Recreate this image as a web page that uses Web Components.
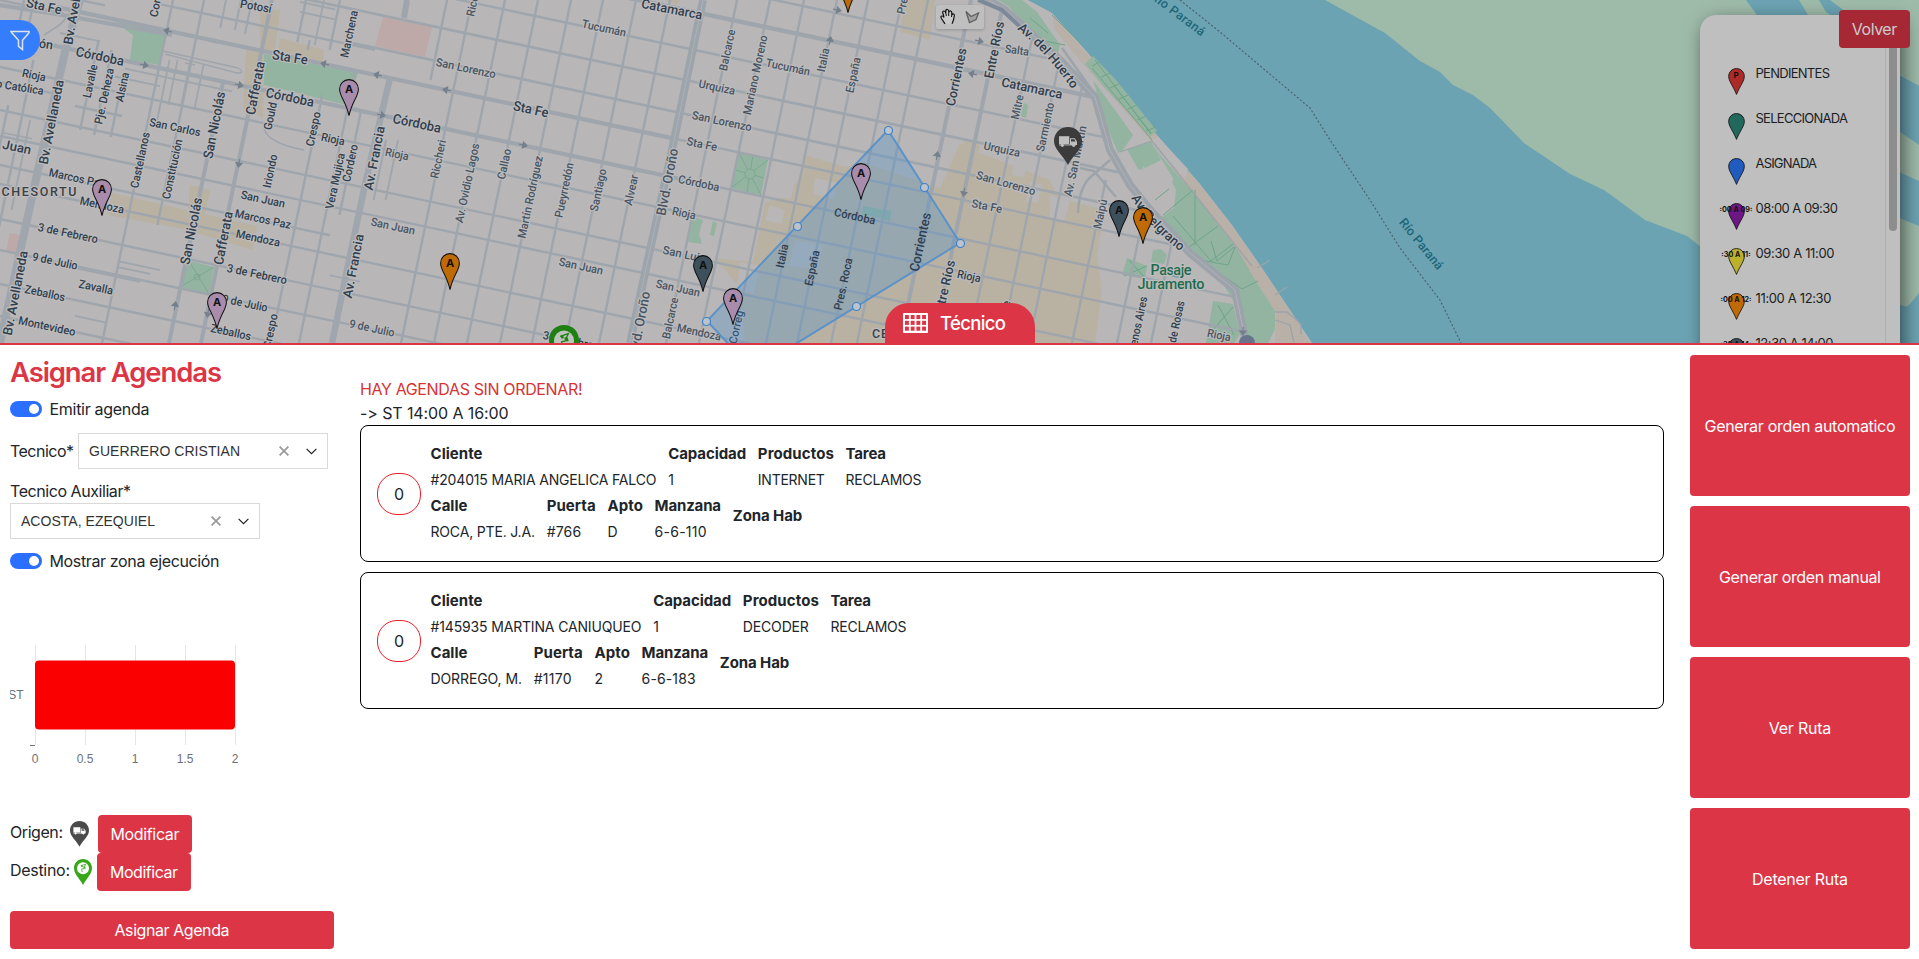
<!DOCTYPE html>
<html lang="es">
<head>
<meta charset="utf-8">
<title>Asignar Agendas</title>
<style>
html,body{margin:0;height:100%;overflow:hidden}
body{font-family:Inter,"Liberation Sans",sans-serif;font-size:16px;line-height:24px;color:#212529;background:#fff}
</style>
</head>
<body>
<agenda-page></agenda-page>
<script>
const RED = '#dc3545';
const fitted = [];

class BaseEl extends HTMLElement {
  constructor() { super(); this.attachShadow({ mode: 'open' }); }
  connectedCallback() { if (!this.done) { this.done = true; this.shadowRoot.innerHTML = this.view(); } }
  a(n, d = '') { return this.getAttribute(n) ?? d; }
}

/* Single line of text tracked to a given width */
class UiText extends BaseEl {
  view() {
    fitted.push(this);
    return `<style>:host{display:inline-block;white-space:nowrap}</style><slot></slot>`;
  }
  fit() {
    const w = parseFloat(this.a('w', '0')), n = this.textContent.length;
    if (!w || n < 2) return;
    const ls = (w + 1 - this.getBoundingClientRect().width) / (n - 1);
    this.style.letterSpacing = ls.toFixed(3) + 'px';
    this.style.marginRight = (-ls).toFixed(3) + 'px';
  }
}

class UiButton extends BaseEl {
  view() {
    return `<style>:host{display:flex;align-items:center;justify-content:center;box-sizing:border-box;height:38px;border-radius:4px;background:${RED};color:#fff;font-size:16px;padding-bottom:1px}</style><slot></slot>`;
  }
}

class UiSwitch extends BaseEl {
  view() {
    return `<style>:host{display:flex;align-items:center;gap:7.500px;height:24px}
    i{width:32px;height:16px;border-radius:8px;background:#2b6fff;display:flex;justify-content:flex-end;align-items:center;box-sizing:border-box;padding-right:3px}
    i::after{content:"";width:10.5px;height:10.5px;border-radius:50%;background:#fff}</style><i></i><slot></slot>`;
  }
}

class UiSelect extends BaseEl {
  view() {
    return `<style>:host{display:flex;align-items:center;box-sizing:border-box;width:250px;height:36px;border:1px solid #d9d9d9;background:#fff;padding:0 10px;font:14px/34px "Liberation Sans",Arial,sans-serif;color:#333}
    div{flex:1} svg{display:block}</style><div><slot></slot></div>
    <svg width="10" height="10" viewBox="0 0 10 10" style="margin-right:17px"><path d="M.6.6l8.8 8.8M9.4.6L.6 9.4" stroke="#999" stroke-width="1.7" fill="none"/></svg>
    <svg width="11" height="7" viewBox="0 0 11 7"><path d="M.6.8l4.9 4.9L10.4.8" stroke="#222" stroke-width="1.2" fill="none"/></svg>`;
  }
}

/* Teardrop marker */
class MapPin extends BaseEl {
  view() {
    const w = +this.a('size', '20'), h = w * 1.85, tall = this.hasAttribute('short') ? 27 : 36;
    const vb = tall === 27 ? '0 0 20 31' : '0 0 20 36';
    const d = tall === 27
      ? 'M10 .7C4.8 .7.8 4.6.8 9.8c0 3.6 2.3 7 4.3 10.700C7.600 25 9 28 10 30.300c1-2.300 2.400-5.300 4.900-9.800 2-3.700 4.300-7.100 4.300-10.700C19.200 4.600 15.200.7 10 .7z'
      : 'M10 .6C4.700.6.6 4.700.6 9.900c0 3.700 1.700 6.600 3.700 10.600C6.800 25.500 9 31 10 35.700c1-4.700 3.200-10.200 5.700-15.200 2-4 3.700-6.900 3.700-10.600C19.400 4.700 15.300.6 10 .6z';
    return `<style>:host{display:block;position:relative;width:${w}px}svg{display:block;width:${w}px;height:${tall === 27 ? 27 : h}px;overflow:visible}
    span{position:absolute;left:-10px;right:-10px;top:${this.a('ty', '4')}px;text-align:center;font:bold ${this.a('fs', '11')}px/12px Inter,sans-serif;color:#111;white-space:nowrap}</style>
    <svg viewBox="${vb}" preserveAspectRatio="none"><path d="${d}" fill="${this.a('color')}" stroke="#111" stroke-width="1"/></svg><span>${this.a('label')}</span>`;
  }
}

class TruckPin extends BaseEl {
  view() {
    const w = +this.a('size', '28');
    return `<style>:host{display:block}svg{display:block}</style><svg width="${w}" height="${w * 38 / 28}" viewBox="0 0 28 38">
    <path d="M14 0C6 0 0 6.200 0 14c0 8.500 8.500 13.500 14 24 5.500-10.500 14-15.500 14-24C28 6.200 22 0 14 0z" fill="${this.a('color', '#3b3b3b')}"/>
    <g fill="${this.a('ink', '#bfbfbf')}"><path d="M5 9.200h10.300v7.800H5z"/><path d="M5 17.400h16.500v1H5z"/><path d="M16 11.300h4.800l2.200 3.200V18h-7z"/><circle cx="8.300" cy="18.300" r="1.600"/><circle cx="19.700" cy="18.300" r="1.600"/></g>
    <path d="M17 12.300h3.300l1.300 2.200H17z" fill="${this.a('color', '#3b3b3b')}"/></svg>`;
  }
}

class FlagPin extends BaseEl {
  view() {
    const w = +this.a('size', '18');
    return `<style>:host{display:block}svg{display:block}</style><svg width="${w}" height="${w * 26 / 18}" viewBox="0 0 18 26">
    <path d="M9 0C3.900 0 0 4 0 9c0 4.200 2 6.500 4.600 10.200C6.500 21.900 8 23.800 9 26c1-2.200 2.500-4.100 4.400-6.800C16 15.500 18 13.200 18 9c0-5-3.900-9-9-9z" fill="${this.a('color', '#35a718')}"/>
    <circle cx="9" cy="9.300" r="6" fill="${this.a('ink', '#fff')}"/><path d="M6.600 6.800l5-1.600-1 2.200.7 1.900-3.700.7.6 3" fill="none" stroke="${this.a('color', '#35a718')}" stroke-width=".8"/><path d="M7 6.800l1.600-.5.3 1.500-1.500.4zM9.200 7.600l1.500-.4.300 1.600-1.500.3z" fill="${this.a('color', '#35a718')}"/></svg>`;
  }
}

/* Street map drawn as one free canvas */
class CityMap extends BaseEl {
  view() {
    const R = '#9fa5ac';
    const ew = (y0, x1, x2, w = 2.4) => `<path d="M${x1} ${y0 + .213 * x1}L${x2} ${y0 + .213 * x2}" stroke-width="${w}"/>`;
    const ns = (x0, y1, y2, w = 2.4) => `<path d="M${x0 - .207 * y1} ${y1}L${x0 - .207 * y2} ${y2}" stroke-width="${w}"/>`;
    const E = [[-5,57,672,4.2],[-5,672,1200],[34,0,690,4.2],[34,690,1240],[67,0,1300],[110,0,1300],[136,0,1300],[165,0,330],[184,0,1300],[219,0,1300],[250,0,1300],[284,0,300],[316,0,200],
      [-32,350,1200,2.6],[-66,300,1200,2.6],[-98,440,1200],[-136,560,1200,4.4],[-165,770,1200],[-30,160,375],[0,0,64],[-17,70,105],[82,0,58],[90,75,122],[42,125,232,1.8],[52,115,160,1.8],[20,60,100,1.800],
      [-52,300,335,1.8],[-62,300,335,1.8],[236,118,160,1.8],[252,50,140,1.8],[300,75,105,1.8],[242,118,150,1.8],[132,2,32,1.600],[205,330,360,1.5],[290,280,300,1.5]].map(a => ew(...a)).join('');
    const N = [[46,60,343],[107,40,130],[122,50,135],[139,80,137],[173,0,343],[204,0,225,2.4],[182,60,120,1.8],[190,60,105,1.8],[203,60,105,1.8],[217,65,110,1.8],
      [240,80,343,4],[272,0,343,4],[226,0,28,2],[241,0,30,2],[252,0,34,2],[306,0,42],[318,40,50],[324,0,45,1.8],[340,0,50],[342,95,343],[370,70,343],[384,110,215],[447,0,80],[472,0,343],[505,0,343],[538,0,343],[571,0,343],[603,0,343],[636,0,343],[670,0,343],
      [737,0,343],[770,0,343],[804,0,343],[837,0,343],[868,0,343],[902,0,343],[928,0,343],[971,0,343,4],[1004,0,343,4],[1040,0,343],[1072,0,343],[1100,60,343],[1143,180,343],[1188,210,343],[1222,240,343],[415,140,200,1.8],[427,140,200,1.8],[30,105,170],[24,0,60],[34,0,60],[55,120,210,1.8]].map(a => ns(...a)).join('');
    const arrows = [[168,31,192],[325,64,192],[378,75,192],[447,90,192],[144,65,12],[239,85,12],[381,115,12],[523,145,12],[837,10,12],[979,41,12],[973,74,192],[239,163,100],[175,306,-80],[208,313,100],[830,41,-80],[937,156,-80],[964,192,100],[1243,331,90]]
      .map(([x, y, r]) => `<path transform="translate(${x} ${y})rotate(${r})" d="M-4 0h6M0-3l4 3-4 3z" stroke="#75808c" stroke-width="1.200" fill="#75808c"/>`).join('');
    const A = 12, V = -78;
    const L = [['Sta Fe',44,6,A,13,36],['Bv. Avellaneda',75,2,-80,13,86],['Bv. Avellaneda',51,122,-79,13,86],['Bv. Avellaneda',15,293,-79,13,86],['Cor',155,8,V,11.5,18],['ón',46,44,8,12.5,14],['o Católica',20,87,9,11.5,48],
      ['Potosí',256,6,10,12,32],['Córdoba',100,56,A,13.5,49],['Sta Fe',290,57,9,13.5,36],['Córdoba',290,97,A,13.5,49],['Córdoba',417,123,A,13.5,49],['San Nicolás',214,125,-79,13.5,68],['San Nicolás',191,231,-79,13.5,68],
      ['Cafferata',255,88,-79,13.5,54],['Cafferata',223,238,-79,13.5,54],['Av. Francia',374,158,-79,13,65],['Av. Francia',353,266,-79,13,65],['Lavalle',90,81,V,11.5,34],['Pje. Deheza',104,96,V,11.5,57],['Alsina',122,87,V,11.5,30],
      ['Castellanos',140,160,V,11.5,57],['Constitución',172,169,V,11.5,61],['San Carlos',175,127,A,11.5,52],['Rioja',34,75,A,11.5,24],['Marchena',349,34,V,11.5,48],['Gould',270,116,V,11.5,28],['Crespo',313,129,V,11.5,35],
      ['Rioja',333,139,A,11.5,24],['Rioja',397,154,A,11.5,24,1],['Vera Mujica',335,181,V,11.5,57],['Cordero',350,163,V,11.5,38],['Iriondo',270,171,V,11.5,34],['Riccheri',438,159,V,11.5,39,1],['Av. Ovidio Lagos',467,183,V,11.5,81,1],
      ['Riccheri',474,-3,V,11.5,39,1],['San Lorenzo',466,68,A,11.5,61,1],['Marcos Paz',77,178,A,11.5,57],['Mendoza',102,205,A,11.5,45],['San Juan',263,199,A,11.5,45],['Marcos Paz',263,219,A,11.5,57],['Mendoza',258,238,A,11.5,45],
      ['3 de Febrero',68,233,A,11.5,61],['9 de Julio',55,261,A,11.5,46],['Zavalla',96,287,A,11.5,35],['Zeballos',45,293,A,11.5,41],['Montevideo',47,326,A,11.5,58],['3 de Febrero',257,274,A,11.5,61],['9 de Julio',245,303,A,11.5,46],
      ['Zeballos',231,332,A,11.5,41],['Crespo',270,331,V,11.5,35],['9 de Julio',372,328,A,11.5,46,1],['San Juan',393,226,A,11.5,45,1],['Juan',17,147,A,13,29],
      ['Catamarca',672,9,11,13,62],['Tucumán',604,28,A,11.5,45,1],['Sta Fe',531,109,A,13.5,36],['Callao',504,164,V,11.5,31,1],['Martín Rodríguez',530,197,V,11.5,84,1],['Pueyrredón',564,190,V,11.5,56,1],['Santiago',598,190,V,11.5,43,1],
      ['Alvear',631,190,V,11.5,31,1],['San Juan',581,266,A,11.5,45,1],['Blvd. Oroño',667,182,-79,13.5,68,1],['Blvd. Oroño',639,325,-79,13.5,68,1],['Balcarce',727,50,V,11.5,42,1],['Mariano Moreno',755,75,V,11.5,81,1],['Tucumán',788,67,A,11.5,45,1],
      ['Urquiza',717,87,A,11.5,37,1],['San Lorenzo',722,121,A,11.5,61,1],['Sta Fe',702,144,A,11.5,31,1],['Córdoba',699,183,A,11.5,42,1],['Rioja',684,213,A,11.5,24,1],['San Luis',684,254,A,11.5,43,1],['San Juan',678,288,A,11.5,45,1],
      ['Balcarce',670,318,V,11.5,42,1],['Mendoza',699,332,A,11.5,45,1],['Italia',823,60,V,11.5,24,1],['España',853,75,V,11.5,36,1],['Pres. Roca',906,-12,V,11.5,53,1],['Corrientes',956,77,V,13,59],
      ['Entre Ríos',944,289,-77,13,59],['3 de Febrero',573,341,A,11.5,61],['Correg',736,327,V,11.5,34],
      ['Salta',1017,50,8,11.5,24,1],['Entre Ríos',994,50,-79,13,58],['Catamarca',1032,88,A,13,62],['Mitre',1017,107,V,11.5,25,1],['Sarmiento',1045,127,V,11.5,50,1],['Av. San Martín',1075,161,V,11.5,72,1],['Urquiza',1002,149,A,11.5,37,1],
      ['San Lorenzo',1006,183,16,11.5,61,1],['Sta Fe',987,206,11,11.5,31,1],['Maipú',1100,214,V,11.5,30,1],['Rioja',969,276,A,11.5,24],['Buenos Aires',1137,327,V,11.5,62],['Juan M. de Rosas',1172,341,V,11.5,82],['Rioja',1219,335,A,11.5,24,1],['Mitre',1004,313,V,11.5,25]];
    const Lp = [['Córdoba',855,216,A,11.5,42],['Italia',782,256,V,11.5,24],['España',812,268,V,11.5,36],['Pres. Roca',843,284,V,11.5,53],['Corrientes',920,242,-78,13.5,60]];
    const lab = ([t, x, y, r, s, w, soft]) => `<text transform="translate(${x} ${y})rotate(${r})" y="${s * .36}" font-size="${s}" textLength="${w}" lengthAdjust="spacingAndGlyphs" fill="${soft ? '#465463' : '#2f3e4e'}">${t}</text>`;
    const pins = [['#a98bab',102,215],['#a98bab',349,115],['#a98bab',217,328],['#a98bab',861,199],['#a98bab',733,324],['#bf6a04',450,289],['#bf6a04',848,12],['#3e505b',703,291],['#3e505b',1119,235.5],['#bf6a04',1143,242.500]]
      .map(([c, x, y]) => `<map-pin color="${c}" label="A" style="position:absolute;left:${x - 10}px;top:${y - 36}px"></map-pin>`).join('');
    const G = '#92b4a0', B = '#b9b2a3';
    return `<style>:host{display:block;position:relative;overflow:hidden;height:343px;background:#b8b6b7}svg{display:block}.p{position:absolute}
    .tools{position:absolute;left:936px;top:5px;display:flex;box-shadow:0 1px 3px rgba(0,0,0,.2);border-radius:2px;background:#bfbfbf}
    .lbl text,.ins text{font-family:Roboto,sans-serif;font-weight:500;text-anchor:middle}
    .lbl text{paint-order:stroke;stroke:#bebcbd;stroke-width:2.400px;stroke-linejoin:round}</style>
    <svg width="1919" height="343" viewBox="0 0 1919 343">
    <defs><clipPath id="land"><path d="M0 0H985L1005 10 1060 60 1095 97 1110 150 1130 185 1150 210 1190 253 1235 290 1245 343H0z"/></clipPath></defs>
    <g fill="#bda9a7"><path d="M383 17L432 27 425 57 375 46z"/><path d="M10 233l10 2-2 20-12-4z"/></g>
    <g fill="${B}"><path d="M260 8l20 2-5 42-15-4zM246 50l18 3-1 65-20-10zM280 38l44 12-1 13-45-13zM190 185l20 5-8 40-15-5zM112 193l145 33-4 24-70-21-75-14z"/>
    <path d="M805 155l40 12 20-4 75 25 20-45 20 10 70 27 8 18 47 12-8 45 5 35-7 53H745l-5-55-25-30 38 4 12-60 20-5 15-20z"/><path d="M905 0h30l-5 40-30-8zM965 140l15 5-5 25-15-5z"/><path d="M665 0h15l-3 5z"/></g>
    <g fill="#b8b6b7"><path d="M815 178l22 5-4 16-20-5zM770 205l15 5-4 14-16-4zM782 185l12 2-3 12-12-2zM795 240l28 5-6 25-28-4zM740 262l20 4-6 28-17-4zM1015 155l15 2-6 20-12-2zM1030 182l12 3-4 18-12-2zM1050 195l20 6-6 20-14-4z"/></g>
    <g fill="${G}"><path d="M115 22l51 9-6 34-30-5 3-25zM264 54l94 19-11 32-83-20z"/><path d="M189 261l25 6-5 27-29-7z"/><path d="M739 153l29 7-7 35-30-7z"/><path d="M693 217l10 3-4 14 3 10-14-2zM713 221l4 2-3 13-4-1z"/><path d="M863 206l28 5-1 10-28-7z"/><path d="M1024 103l4 2-2 13-6-2z"/></g>
    <g stroke="#7ba38c" stroke-width=".8" fill="none"><path d="M189 261l20 33M214 267l-34 20M739 153l22 42M768 160l-37 28M753 155l-6 37M735 170l29 8"/><circle cx="750" cy="174" r="5" fill="#92b4a0"/><circle cx="197" cy="277" r="3"/></g>
    <path d="M1028 0L1052 13 1088 53 1130 105 1157 135 1200 184 1232 225 1262 268 1290 310 1312 343H1919V0z" fill="#6ca3b2"/>
    <path d="M1052 15L1088 55 1130 106 1157 136 1200 185 1232 226 1262 269 1290 311 1310 343H1275L1276 312 1257 282 1235 247 1190 188 1152 142 1090 72 1055 30z" fill="#b9b0a8"/>
    <path d="M1152 140l6-3 30 32-3 10z" fill="#b8b6b7"/>
    <g fill="${G}"><path d="M998 0h24l15 12 23 33-3 12-20-20L1008 6z"/><path d="M1093 56l24 25 40 50-7 5-45-48-20-24z"/><path d="M1093 80l16 22 24 33-10 15-5 3-10-24z"/><path d="M1127 149l24-7 10 14 39 45 37 48 20 34 18 28v18l-7 14h-22l-8-35-14-22-40-34-26-32 16-12 2-18-10-20-10 2-13 6z"/>
    <path d="M1153 250l8-1 6 6-3 9-13-2zM1127 258l20 8-2 13-23-4zM1213 301l20 3 7 30-6 9h-28z"/></g>
    <path d="M1151 142l22 36-2 16-14 18-12-18-9-25 6 1z" fill="#b8b6b7"/><path d="M1133 156l12 12 16-8-10-18-14 5z" fill="${G}"/>
    <g stroke="#6fa488" stroke-width="1" fill="none"><path d="M1095 60l56 74M1092 68l60 72M1115 87l36 46M1092 66l8-4M1101 77l9-4M1110 88l9-4M1119 99l9-4M1128 109l9-4M1137 120l9-4M1146 131l10-4M1193 190l-30 25M1195 190v55M1173 216l38 45 22-17M1188 248l30-22M1211 241l6 20 17-14M1200 260l28 5 7-18M1222 275l20 14 16-8M1155 200l14-11M1129 260l16 18M1147 266l-23 10M1218 305l16 30M1233 307l-22 25M1030 18l18 15M1040 40l25 5M1052 15l30 30"/></g>
    <g clip-path="url(#land)" stroke="${R}" fill="none">${E}${N}
    <path d="M80 0L65 52 38 170 0 343" stroke-width="8" stroke="#a0a6ae"/><path d="M390 78L366 180 355 232 332 343" stroke-width="6.500" stroke="#a0a6ae"/><path d="M407 0l-3 18" stroke-width="6"/>
    <path d="M703 0L672 150 650 250 630 343" stroke-width="8" stroke="#9ca4ac"/><path d="M703 0L672 150 650 250 630 343" stroke-width="1" stroke="#aeb1b5"/>
    <path d="M0 5l62 10 110 20" stroke-width="4.200"/><path d="M72 10q-8 12-14 16l-14 9" stroke-width="1.600"/>
    <path d="M163 51l75 17q8 5-1 5L165 54M187 35l30 8M185 63l10 2M264 128q3 15 40 22" stroke-width="1.400"/></g>
    <g stroke="#9ca3aa" fill="none"><path d="M985 -2L1005 10 1060 60 1095 97 1110 150 1130 185 1150 210 1190 253 1235 290 1246 343" stroke-width="8"/><path d="M985 -2L1005 10 1060 60 1095 97 1110 150 1130 185 1150 210 1190 253 1235 290 1246 343" stroke="#b0b2b5" stroke-width="1"/><path d="M978 0l24 10 26 24" stroke="#7c8999" stroke-width="4"/>
    <path d="M1062 48l32 45M1110 160l-17 15q-14 10-15 38M1080 168l14 3 22 26" stroke-width="2.400"/><path d="M1120 152l32-11 100 125M1275 320l15 5 4 18M1275 312h12l14 12v10M1257 268l13-8M1275 295l12-8" stroke-width="1.300"/></g>
    <path d="M1239 343a8 8 0 0 1 16 0z" fill="#66758c"/><path d="M1172 272l8 2-2 4-8-2z" fill="#6ca3b2"/>
    ${arrows}
    <path d="M1325 0L1385 33 1420 61 1440 72 1453 85 1473 95 1490 108 1524 143 1570 174 1604 190 1645 220 1687 236 1710 254 1919 310V0z" fill="#9ebaa9"/>
    <path d="M1746 0L1757 15 1800 60 1919 130V86L1850 50 1808 15 1799 0z" fill="#6ca3b2"/><path d="M1819 0L1826 12 1838 20 1850 15 1830 0z" fill="#6ca3b2"/>
    <path d="M1890 70L1919 86V145L1890 125zM1890 168L1919 181V226L1890 214zM1890 320L1910 304 1919 293V343H1700V250z" fill="#6ca3b2"/>
    <path d="M1180 0L1220 32 1310 108 1330 140 1370 200 1400 248 1440 300 1461 343" fill="none" stroke="#4a6570" stroke-width="1.200" stroke-dasharray="2 2"/>
    <g class="lbl">${L.map(lab).join('')}
    <text x="39" y="196" font-size="12.500" textLength="75" fill="#3c4043">CHESORTU</text><text x="898" y="338" font-size="12.500" textLength="52" fill="#3c4043">CENTRO</text>
    <g fill="#2f3e4e" font-size="13"><path id="huerto" d="M1017 29Q1046 52 1072 89" fill="none"/><text style="text-anchor:start" textLength="82"><textPath href="#huerto">Av. del Huerto</textPath></text>
    <path id="belg" d="M1131 198Q1150 228 1180 251" fill="none"/><text style="text-anchor:start" textLength="73"><textPath href="#belg">Av. Belgrano</textPath></text></g></g>
    <g class="lbl" fill="#1d6b4d"><text x="1171" y="274.500" font-size="14.500" textLength="41">Pasaje</text><text x="1171" y="288.500" font-size="14.500" textLength="67">Juramento</text></g>
    <g class="ins" fill="#1c6678"><text transform="translate(1178 14)rotate(37)" y="4" font-size="12.500" textLength="64">Río Paraná</text><text transform="translate(1421 244)rotate(51)" y="4" font-size="12.500" textLength="62">Río Paraná</text></g>
    <path d="M888 130L960 243 753 370 707 321z" fill="#4a90d0" fill-opacity=".3" stroke="#5b92c8" stroke-width="2"/>
    <g class="ins">${Lp.map(lab).join('')}</g>
    <g fill="#bcc3ca" stroke="#3b82cf" stroke-width="1.200"><circle cx="888.500" cy="130.500" r="4"/><circle cx="924.500" cy="187.500" r="4"/><circle cx="960.500" cy="243.500" r="4"/><circle cx="856.500" cy="306.500" r="4"/><circle cx="797.500" cy="226.500" r="4"/><circle cx="706.500" cy="321.500" r="4"/></g>
    </svg>${pins}
    <truck-pin class="p" style="left:1054px;top:127px"></truck-pin>
    <flag-pin class="p" size="30" color="#1f7f12" ink="#bcc4bb" style="left:549px;top:325px"></flag-pin>
    <div class="tools"><svg width="24" height="24" viewBox="0 0 24 24"><path d="M9 18.800L5.300 13.300q-1-2 .5-2.300 1.200-.2 2.200 1.500L6.700 7.500q0-1.600 1.300-1.500T9.800 8V5.500Q10.200 4.200 11.400 4.500T12.700 6v1.200Q13.400 5.700 14.600 6T15.800 8v2Q16.600 8.500 17.700 9t.5 2.500L17.500 15l-1.500 3.800" fill="#c9c9c9" stroke="#111" stroke-width="1.200"/><path d="M9.800 8l.5 3M12.700 7.200V11M15.800 9.500L15.500 12" stroke="#111"/></svg>
    <svg width="24" height="24" viewBox="0 0 24 24"><path d="M6 6.500l5 5 7.500-3.500-2.500 6.500-6.500 3z" fill="#a2a2a2" stroke="#5f5f5f" stroke-width="1.300"/></svg></div>`;
  }
}

class FilterButton extends BaseEl {
  view() {
    return `<style>:host{display:flex;align-items:center;width:40px;height:40px;box-sizing:border-box;padding-left:10px;background:#347dfc;border-radius:0 20px 20px 0}</style>
    <svg width="21" height="21" viewBox="0 0 21 21" fill="none" stroke="#e0e4ea" stroke-width="1.500"><path d="M1 1.500h18v1.300l-6.500 7.500v9.200l-4-3.200v-6L1.800 2.800z"/></svg>`;
  }
}

class LegendItem extends BaseEl {
  view() {
    return `<style>:host{display:flex;height:45px;gap:11px;align-items:flex-start;font-size:13px;line-height:16px;color:#1b1d1f}ui-text{margin-top:-3px}</style>
    <map-pin short size="17" ty="1" fs="${this.a('code').length > 1 ? 7.2 : 8}" color="${this.a('color')}" label="${this.a('code')}"></map-pin><ui-text w="${this.a('w')}">${this.a('name')}</ui-text>`;
  }
}

class LegendPanel extends BaseEl {
  view() {
    const rows = [['PENDIENTES','#ae2a29','P',73.5],['SELECCIONADA','#21695c','',91.5],['ASIGNADA','#205bc0','',60.5],['08:00 A 09:30','#6d1685',':00 A 09:',81.5],['09:30 A 11:00','#bdb12c',':30 A 11:',78],['11:00 A 12:30','#bf6a04',':00 A 12:',75],['12:30 A 14:00','#3e505b',':30 A 14:',77]];
    return `<style>:host{display:flex;height:400px;width:200px;background:#bfbfbf;border-radius:16px 0 0 0;box-shadow:4px 6px 18px rgba(0,0,0,.55);box-sizing:border-box}
    .l{flex:1;padding:53px 0 0 27.500px}.s{width:15px;box-sizing:border-box;border-left:1px solid #aeaeae;padding-left:3px}.s i{display:block;width:8px;height:216px;border-radius:4px;background:#8d8d8d}</style>
    <div class="l">${rows.map(r => `<legend-item name="${r[0]}" color="${r[1]}" code="${r[2]}" w="${r[3]}"></legend-item>`).join('')}</div><div class="s"><i></i></div>`;
  }
}

class HoursChart extends BaseEl {
  view() {
    return `<style>:host{display:block;overflow:hidden;height:140px;width:324px}svg{display:block}text{font:12px "Liberation Sans",Arial,sans-serif;fill:#6e7079}</style>
    <svg width="324" height="140" viewBox="10 640 324 140"><path d="M35.500 645v100M85.500 645v100M135.500 645v100M185.500 645v100M235.500 645v100" stroke="#e0e6f1"/>
    <path d="M30 745.500h5" stroke="#6e7079"/><rect x="35" y="660.500" width="200" height="69" rx="4" fill="#fa0000"/>
    <text x="23.500" y="699" text-anchor="end">ST</text><g text-anchor="middle"><text x="35" y="763">0</text><text x="85" y="763">0.5</text><text x="135" y="763">1</text><text x="185" y="763">1.5</text><text x="235" y="763">2</text></g></svg>`;
  }
}

class FieldCol extends BaseEl {
  view() {
    const v = this.a('v');
    return `<style>:host{display:flex;flex-direction:column;align-items:flex-start}b{font-weight:700;font-size:15px;line-height:26px;height:26px}span{font-size:14px;line-height:25.500px;height:25.500px}</style>
    <b><ui-text w="${this.a('hw')}">${this.a('h')}</ui-text></b>${v ? `<span><ui-text w="${this.a('vw')}">${v}</ui-text></span>` : ''}`;
  }
}

class AgendaCard extends BaseEl {
  view() {
    const [r1, r2] = JSON.parse(this.a('rows'));
    const col = c => `<field-col h="${c[0]}" hw="${c[1]}" v="${c[2] || ''}" vw="${c[3] || 0}"></field-col>`;
    return `<style>:host{display:flex;align-items:center;box-sizing:border-box;height:137px;border:1px solid #000;border-radius:8px;padding:0 16px 2px;gap:9.500px}
    .n{box-sizing:border-box;width:44px;height:42px;border:1px solid #ec1c24;border-radius:20px;display:flex;align-items:center;justify-content:center;margin-top:2px}
    .r{display:flex;gap:11.700px;align-items:center}field-col:last-child:not([v*="R"]){padding-bottom:5px}</style>
    <div class="n">0</div><div><div class="r">${r1.map(col).join('')}</div><div class="r">${r2.map(col).join('')}</div></div>`;
  }
}

class AgendaForm extends BaseEl {
  view() {
    return `<style>:host{display:flex;flex-direction:column;align-items:stretch}
    h3{margin:0 0 8px;font-size:27.500px;line-height:34px;font-weight:600;color:${RED}}
    .row{display:flex;align-items:center}</style>
    <h3><ui-text w="211">Asignar Agendas</ui-text></h3>
    <ui-switch><ui-text w="99">Emitir agenda</ui-text></ui-switch>
    <div class="row" style="margin-top:12px;justify-content:flex-start"><ui-text w="63">Tecnico*</ui-text><ui-select style="margin-left:4px"><ui-text w="150">GUERRERO CRISTIAN</ui-text></ui-select></div>
    <div style="margin-top:10px;height:24px;line-height:25px"><ui-text w="120">Tecnico Auxiliar*</ui-text></div>
    <ui-select><ui-text w="133">ACOSTA, EZEQUIEL</ui-text></ui-select>
    <ui-switch style="margin-top:10px"><ui-text w="169">Mostrar zona ejecución</ui-text></ui-switch>
    <hours-chart style="margin-top:67px"></hours-chart>
    <div class="row" style="margin-top:35px;height:38px"><ui-text w="52" style="margin-top:-4px">Origen:</ui-text><truck-pin size="19" color="#4b4b4b" ink="#fff" style="margin-left:7px"></truck-pin><ui-button style="width:94px;margin-left:9px"><ui-text w="68">Modificar</ui-text></ui-button></div>
    <div class="row" style="height:38px"><ui-text w="59" style="margin-top:-4px">Destino:</ui-text><flag-pin style="margin-left:4px"></flag-pin><ui-button style="width:94px;margin-left:5px"><ui-text w="67">Modificar</ui-text></ui-button></div>
    <ui-button style="margin-top:20px"><ui-text w="114">Asignar Agenda</ui-text></ui-button>`;
  }
}

class AgendaPage extends BaseEl {
  view() {
    const c1 = [[['Cliente',51,'#204015 MARIA ANGELICA FALCO',225],['Capacidad',77,'1'],['Productos',75,'INTERNET',66],['Tarea',39.5,'RECLAMOS',75]],
      [['Calle',36,'ROCA, PTE. J.A.',103.5],['Puerta',48,'#766',33.5],['Apto',34.5,'D'],['Manzana',65.5,'6-6-110',51],['Zona Hab',68.5]]];
    const c2 = [[['Cliente',51,'#145935 MARTINA CANIUQUEO',210],['Capacidad',77,'1'],['Productos',75,'DECODER',65],['Tarea',39.5,'RECLAMOS',75]],
      [['Calle',36,'DORREGO, M.',90.5],['Puerta',48,'#1170',37],['Apto',34.5,'2'],['Manzana',65.5,'6-6-183',53],['Zona Hab',68.5]]];
    const cells = [2, 7.7, 13.4, 19.1].map(x => [2, 7.8, 13.6].map(y => `<path d="M${x} ${y}h3.900v4.100h-3.900z"/>`).join('')).join('');
    return `<style>:host{display:flex;flex-direction:column;height:959px;width:1919px;position:relative;overflow:hidden}
    .top{position:relative;height:343px;overflow:hidden;border-bottom:2px solid ${RED}}
    .over{position:absolute}
    .tab{left:885px;top:303px;width:150px;height:40px;box-sizing:border-box;background:${RED};border-radius:24px 24px 0 0;display:flex;align-items:center;gap:12px;padding:0 0 0 18px;color:#fff;font-size:18.500px;font-weight:500}
    .panel{display:grid;grid-template-columns:324px 1304px 220px;column-gap:26px;padding:10px 9px 10px 10px;height:594px}
    .list{display:flex;flex-direction:column;padding-top:22px}
    .acts{display:grid;grid-template-rows:repeat(4,141px);row-gap:10px}.acts ui-button{height:auto;padding:0}</style>
    <div class="top"><city-map></city-map>
      <filter-button class="over" style="left:0;top:20px"></filter-button>
      <legend-panel class="over" style="left:1700px;top:15px"></legend-panel>
      <ui-button class="over" style="left:1839px;top:10px;width:71px;background:#a52834;color:#ccc"><ui-text w="44.500">Volver</ui-text></ui-button>
      <div class="over tab"><svg width="25" height="20" viewBox="0 0 25 20"><rect width="25" height="20" rx="1" fill="#fff"/><g fill="${RED}">${cells}</g></svg><ui-text w="65">Técnico</ui-text></div>
    </div>
    <div class="panel">
      <agenda-form></agenda-form>
      <div class="list"><div style="color:#d63333"><ui-text w="221.500">HAY AGENDAS SIN ORDENAR!</ui-text></div><div><ui-text w="145">-&gt; ST 14:00 A 16:00</ui-text></div>
        <agenda-card rows='${JSON.stringify(c1)}'></agenda-card><agenda-card style="margin-top:10px" rows='${JSON.stringify(c2)}'></agenda-card></div>
      <div class="acts"><ui-button><ui-text w="190">Generar orden automatico</ui-text></ui-button><ui-button><ui-text w="161">Generar orden manual</ui-text></ui-button><ui-button><ui-text w="61.500">Ver Ruta</ui-text></ui-button><ui-button><ui-text w="95">Detener Ruta</ui-text></ui-button></div>
    </div>`;
  }
}

Object.entries({ 'ui-text': UiText, 'ui-button': UiButton, 'ui-switch': UiSwitch, 'ui-select': UiSelect, 'map-pin': MapPin, 'truck-pin': TruckPin, 'flag-pin': FlagPin,
  'city-map': CityMap, 'filter-button': FilterButton, 'legend-item': LegendItem, 'legend-panel': LegendPanel, 'hours-chart': HoursChart, 'field-col': FieldCol,
  'agenda-card': AgendaCard, 'agenda-form': AgendaForm, 'agenda-page': AgendaPage }).forEach(([n, c]) => customElements.define(n, c));
fitted.forEach(t => t.fit());
</script>
</body>
</html>
